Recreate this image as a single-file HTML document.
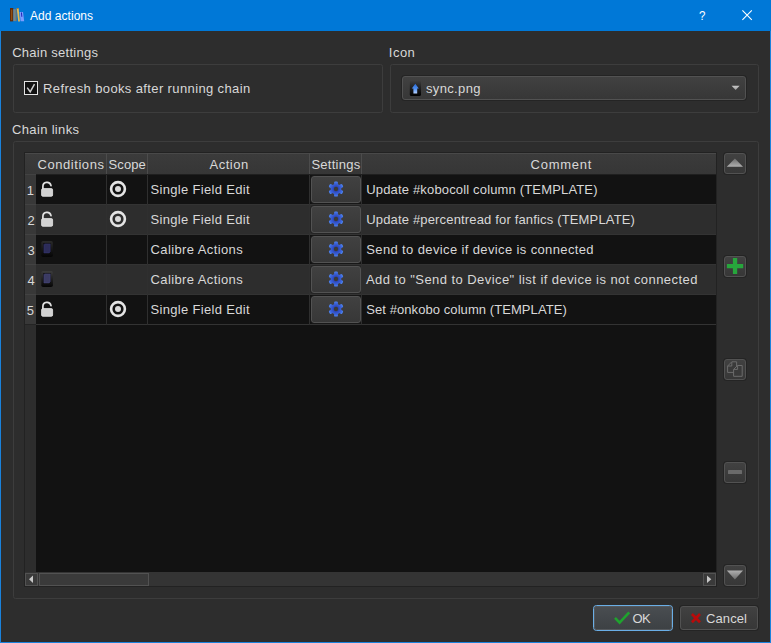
<!DOCTYPE html>
<html><head><meta charset="utf-8"><title>Add actions</title>
<style>
html,body{margin:0;padding:0;}
body{width:771px;height:643px;background:#2d2d2d;position:relative;overflow:hidden;font-family:"Liberation Sans",sans-serif;font-size:13px;color:#dddddd;}
.abs{position:absolute;}
.tx{position:absolute;white-space:nowrap;line-height:normal;}
#title{left:0;top:0;width:771px;height:31px;background:#0078d7;}
#bl{left:0;top:31px;width:1px;height:612px;background:#1a82dc;}
#br{left:770px;top:31px;width:1px;height:612px;background:#1a82dc;}
#bb{left:0;top:642px;width:771px;height:1px;background:#1a82dc;}
.gb{border:1px solid #3d3d3d;border-radius:2.5px;box-sizing:border-box;}
.btn{box-sizing:border-box;border:1px solid #525252;border-radius:3px;background:linear-gradient(#414141,#373737);box-shadow:0 0 0 1px rgba(30,30,30,0.55);}
.hd{top:153px;height:21px;background:linear-gradient(#3b3b3b,#363636);border-top:1px solid #494949;box-sizing:border-box;}
.hsep{top:153px;width:1px;height:21px;background:#4c4c4c;}
.row{left:36px;width:680px;height:29px;border-bottom:1px solid #333;}
.vh{left:25px;width:11px;height:29px;background:#383838;border-bottom:1px solid #242424;border-top:1px solid #424242;box-sizing:content-box;}
.gl{top:175px;width:1px;height:150px;background:#2f2f2f;}
.sb{box-sizing:border-box;border:1px solid #525252;background:#3a3a3a;}
</style></head><body>
<div class="abs" id="title">
<svg class="abs" style="left:9px;top:7px" width="17" height="16" viewBox="0 0 17 16"><rect x="1.0" y="1.0" width="3.3" height="13.4" fill="#5e2a0a"/><rect x="2.2" y="2.6" width="1" height="10.6" fill="#b06a18" opacity="0.75"/><rect x="4.3" y="2.2" width="3.3" height="11.9" fill="#77878b"/><rect x="6.7" y="2.2" width="0.9" height="11.9" fill="#5c6a70"/><polygon points="7.7,0.9 9.6,0.9 10.95,14.4 9.2,14.4" fill="#e9b94e"/><polygon points="7.7,0.9 9.6,0.9 9.7,1.8 7.8,1.8" fill="#9a6a2a"/><polygon points="10.6,4.9 14.0,4.9 15.2,14.3 11.6,14.3" fill="#7c9cff"/><polygon points="12.0,5.5 12.9,5.5 13.3,9.8 12.4,9.8" fill="#1818b0"/></svg>
</div>
<div class="abs" id="bl"></div><div class="abs" id="br"></div><div class="abs" id="bb"></div>
<svg class="abs" style="left:742px;top:10px" width="11" height="11" viewBox="0 0 11 11"><path d="M0.4 0.4L9.8 9.8M9.8 0.4L0.4 9.8" stroke="#fff" stroke-width="1.1" fill="none"/></svg>
<span id="t_title" class="tx" style="left:29.92px;top:9.14px;font-size:12px;color:#ffffff;letter-spacing:0.048px;">Add actions</span>
<span id="t_q" class="tx" style="left:699.1px;top:7.69px;font-size:13.6px;color:#ffffff;letter-spacing:0.000px;transform:scaleX(0.85);transform-origin:0 0;">?</span>
<span id="t_cs" class="tx" style="left:12.18px;top:45.23px;font-size:13px;color:#d8d8d8;letter-spacing:0.258px;">Chain settings</span>
<span id="t_icon" class="tx" style="left:388.84px;top:45.23px;font-size:13px;color:#d8d8d8;letter-spacing:0.480px;">Icon</span>
<span id="t_cl" class="tx" style="left:12.1px;top:122.23px;font-size:13px;color:#d8d8d8;letter-spacing:0.328px;">Chain links</span>
<div class="abs gb" style="left:13px;top:64px;width:370px;height:49px;"></div>
<div class="abs gb" style="left:390px;top:64px;width:369px;height:49px;"></div>
<div class="abs gb" style="left:13px;top:141px;width:746px;height:458px;"></div>
<div class="abs" style="left:24px;top:81px;width:14px;height:14px;box-sizing:border-box;border:1px solid #e4e4e4;background:#121212;"></div>
<svg class="abs" style="left:24px;top:81px" width="14" height="14" viewBox="0 0 14 14"><path d="M3.2 6.6L6.2 10.8L10.5 3.2" fill="none" stroke="#cfcfcf" stroke-width="1.5"/></svg>
<span id="t_refresh" class="tx" style="left:43.02px;top:81.23px;font-size:13px;color:#d8d8d8;letter-spacing:0.377px;">Refresh books after running chain</span>
<div class="abs btn" style="left:402px;top:76px;width:344px;height:24px;"></div>
<svg class="abs" style="left:409px;top:80px" width="13" height="17" viewBox="0 0 13 17"><defs><linearGradient id="sb" x1="0" y1="0" x2="0" y2="1"><stop offset="0" stop-color="#000" stop-opacity="0"/><stop offset="0.55" stop-color="#000" stop-opacity="0.55"/><stop offset="1" stop-color="#000" stop-opacity="1"/></linearGradient><linearGradient id="sa" x1="0" y1="0" x2="0" y2="1"><stop offset="0" stop-color="#2a6ad6"/><stop offset="0.5" stop-color="#4f8ff0"/><stop offset="1" stop-color="#b4d0ff"/></linearGradient></defs><rect x="0.8" y="0.5" width="11.2" height="15.6" rx="1.6" fill="url(#sb)"/><path d="M6.3 3.8L9.8 8.6H8.2V13.4H4.4V8.6H2.8Z" fill="url(#sa)"/></svg>
<span id="t_sync" class="tx" style="left:425.92px;top:81.23px;font-size:13px;color:#d8d8d8;letter-spacing:0.366px;">sync.png</span>
<svg class="abs" style="left:731px;top:85px" width="10" height="6" viewBox="0 0 10 6"><defs><linearGradient id="ca" x1="0" y1="0" x2="0" y2="1"><stop offset="0" stop-color="#c8c8c8"/><stop offset="1" stop-color="#9a9a9a"/></linearGradient></defs><polygon points="0.6,0.8 8.6,0.8 4.6,5" fill="url(#ca)"/></svg>
<div class="abs" style="left:24px;top:152px;width:693px;height:435px;background:#222;"></div>
<div class="abs" style="left:25px;top:153px;width:691px;height:433px;background:#121212;"></div>
<div class="abs" style="left:25px;top:175px;width:11px;height:397px;background:#2d2d2d;"></div>
<div class="abs hd" style="left:25px;width:691px;"></div>
<div class="abs" style="left:25px;top:174px;width:691px;height:1px;background:#1f1f1f;"></div>
<div class="abs hsep" style="left:106px;"></div>
<div class="abs hsep" style="left:147px;"></div>
<div class="abs hsep" style="left:309px;"></div>
<div class="abs hsep" style="left:361px;"></div>
<span id="h_cond" class="tx" style="left:37.56px;top:156.94px;font-size:13px;color:#d8d8d8;letter-spacing:0.551px;">Conditions</span>
<span id="h_scope" class="tx" style="left:108.56px;top:156.94px;font-size:13px;color:#d8d8d8;letter-spacing:0.080px;">Scope</span>
<span id="h_action" class="tx" style="left:209.54px;top:156.94px;font-size:13px;color:#d8d8d8;letter-spacing:0.496px;">Action</span>
<span id="h_set" class="tx" style="left:311.38px;top:156.94px;font-size:13px;color:#d8d8d8;letter-spacing:0.263px;">Settings</span>
<span id="h_com" class="tx" style="left:530.56px;top:156.94px;font-size:13px;color:#d8d8d8;letter-spacing:0.760px;">Comment</span>
<div class="abs vh" style="top:174px;"></div>
<div class="abs row" style="top:175px;background:#121212;"><svg class="abs" style="left:4px;top:5.7px" width="14" height="18" viewBox="0 0 14 18"><path d="M2.9 8.0V5.6a4.1 4.1 0 0 1 8.1-1" fill="none" stroke="#e2e2e2" stroke-width="1.7" stroke-linecap="round"/><rect x="1.6" y="7.6" width="11.0" height="7.7" rx="1.3" fill="#d2d2d2" stroke="#e6e6e6" stroke-width="0.8"/></svg><div class="abs" style="left:71px;top:0;width:22px;height:29px;"><svg class="abs" style="left:1px;top:4px" width="20" height="20" viewBox="0 0 20 20"><circle cx="10" cy="10" r="6.9" fill="none" stroke="#e4e4e4" stroke-width="2.6"/><circle cx="10" cy="10" r="3" fill="#dadada"/></svg></div><div class="abs btn" style="left:275px;top:1px;width:50px;height:27px;"><svg class="abs" style="left:16px;top:4px" width="16" height="16" viewBox="-8 -8 16 16"><defs><radialGradient id="gg" cx="0" cy="0" r="7.6" gradientUnits="userSpaceOnUse"><stop offset="0.3" stop-color="#2c45b8"/><stop offset="0.75" stop-color="#3d66dc"/><stop offset="1" stop-color="#4f86f0"/></radialGradient></defs><g fill="url(#gg)"><circle r="5.3"/><rect x="-1.9" y="-7.6" width="3.8" height="4" rx="1.2" transform="rotate(0)"/><rect x="-1.9" y="-7.6" width="3.8" height="4" rx="1.2" transform="rotate(60)"/><rect x="-1.9" y="-7.6" width="3.8" height="4" rx="1.2" transform="rotate(120)"/><rect x="-1.9" y="-7.6" width="3.8" height="4" rx="1.2" transform="rotate(180)"/><rect x="-1.9" y="-7.6" width="3.8" height="4" rx="1.2" transform="rotate(240)"/><rect x="-1.9" y="-7.6" width="3.8" height="4" rx="1.2" transform="rotate(300)"/></g><circle r="2.2" fill="#3a3a36"/></svg></div></div>
<span id="r0_n" class="tx" style="left:26.7px;top:182.63px;font-size:13px;color:#d8d8d8;letter-spacing:0.000px;">1</span>
<span id="r0_a" class="tx" style="left:150.56px;top:181.63px;font-size:13px;color:#d8d8d8;letter-spacing:0.325px;">Single Field Edit</span>
<span id="r0_c" class="tx" style="left:366.28px;top:181.63px;font-size:13px;color:#d8d8d8;letter-spacing:0.162px;">Update #kobocoll column (TEMPLATE)</span>
<div class="abs vh" style="top:204px;"></div>
<div class="abs row" style="top:205px;background:#2d2d2d;"><svg class="abs" style="left:4px;top:5.7px" width="14" height="18" viewBox="0 0 14 18"><path d="M2.9 8.0V5.6a4.1 4.1 0 0 1 8.1-1" fill="none" stroke="#e2e2e2" stroke-width="1.7" stroke-linecap="round"/><rect x="1.6" y="7.6" width="11.0" height="7.7" rx="1.3" fill="#d2d2d2" stroke="#e6e6e6" stroke-width="0.8"/></svg><div class="abs" style="left:71px;top:0;width:22px;height:29px;"><svg class="abs" style="left:1px;top:4px" width="20" height="20" viewBox="0 0 20 20"><circle cx="10" cy="10" r="6.9" fill="none" stroke="#e4e4e4" stroke-width="2.6"/><circle cx="10" cy="10" r="3" fill="#dadada"/></svg></div><div class="abs btn" style="left:275px;top:1px;width:50px;height:27px;"><svg class="abs" style="left:16px;top:4px" width="16" height="16" viewBox="-8 -8 16 16"><defs><radialGradient id="gg1" cx="0" cy="0" r="7.6" gradientUnits="userSpaceOnUse"><stop offset="0.3" stop-color="#2c45b8"/><stop offset="0.75" stop-color="#3d66dc"/><stop offset="1" stop-color="#4f86f0"/></radialGradient></defs><g fill="url(#gg1)"><circle r="5.3"/><rect x="-1.9" y="-7.6" width="3.8" height="4" rx="1.2" transform="rotate(0)"/><rect x="-1.9" y="-7.6" width="3.8" height="4" rx="1.2" transform="rotate(60)"/><rect x="-1.9" y="-7.6" width="3.8" height="4" rx="1.2" transform="rotate(120)"/><rect x="-1.9" y="-7.6" width="3.8" height="4" rx="1.2" transform="rotate(180)"/><rect x="-1.9" y="-7.6" width="3.8" height="4" rx="1.2" transform="rotate(240)"/><rect x="-1.9" y="-7.6" width="3.8" height="4" rx="1.2" transform="rotate(300)"/></g><circle r="2.2" fill="#3a3a36"/></svg></div></div>
<span id="r1_n" class="tx" style="left:27.5px;top:212.63px;font-size:13px;color:#d8d8d8;letter-spacing:0.000px;">2</span>
<span id="r1_a" class="tx" style="left:150.56px;top:211.63px;font-size:13px;color:#d8d8d8;letter-spacing:0.325px;">Single Field Edit</span>
<span id="r1_c" class="tx" style="left:366.28px;top:211.63px;font-size:13px;color:#d8d8d8;letter-spacing:0.162px;">Update #percentread for fanfics (TEMPLATE)</span>
<div class="abs vh" style="top:234px;"></div>
<div class="abs row" style="top:235px;background:#121212;"><svg class="abs" style="left:4px;top:5px" width="14" height="18" viewBox="0 0 14 18"><defs><linearGradient id="dg0" x1="0" y1="0" x2="0" y2="1"><stop offset="0" stop-color="#2a2a2a"/><stop offset="1" stop-color="#050505"/></linearGradient></defs><rect x="1.3" y="1" width="11.6" height="16" rx="1.8" fill="url(#dg0)"/><rect x="3.2" y="3.2" width="7.4" height="10" fill="#0c0c0c"/><path d="M4.6 3.9H10.2V11.9L9.2 12.9H3.9V4.6Z" fill="#2c2c58" stroke="#38387a" stroke-width="0.5"/></svg><div class="abs btn" style="left:275px;top:1px;width:50px;height:27px;"><svg class="abs" style="left:16px;top:4px" width="16" height="16" viewBox="-8 -8 16 16"><defs><radialGradient id="gg2" cx="0" cy="0" r="7.6" gradientUnits="userSpaceOnUse"><stop offset="0.3" stop-color="#2c45b8"/><stop offset="0.75" stop-color="#3d66dc"/><stop offset="1" stop-color="#4f86f0"/></radialGradient></defs><g fill="url(#gg2)"><circle r="5.3"/><rect x="-1.9" y="-7.6" width="3.8" height="4" rx="1.2" transform="rotate(0)"/><rect x="-1.9" y="-7.6" width="3.8" height="4" rx="1.2" transform="rotate(60)"/><rect x="-1.9" y="-7.6" width="3.8" height="4" rx="1.2" transform="rotate(120)"/><rect x="-1.9" y="-7.6" width="3.8" height="4" rx="1.2" transform="rotate(180)"/><rect x="-1.9" y="-7.6" width="3.8" height="4" rx="1.2" transform="rotate(240)"/><rect x="-1.9" y="-7.6" width="3.8" height="4" rx="1.2" transform="rotate(300)"/></g><circle r="2.2" fill="#3a3a36"/></svg></div></div>
<span id="r2_n" class="tx" style="left:27.5px;top:242.63px;font-size:13px;color:#d8d8d8;letter-spacing:0.000px;">3</span>
<span id="r2_a" class="tx" style="left:150.56px;top:241.63px;font-size:13px;color:#d8d8d8;letter-spacing:0.389px;">Calibre Actions</span>
<span id="r2_c" class="tx" style="left:366.28px;top:241.63px;font-size:13px;color:#d8d8d8;letter-spacing:0.373px;">Send to device if device is connected</span>
<div class="abs vh" style="top:264px;"></div>
<div class="abs row" style="top:265px;background:#2d2d2d;"><svg class="abs" style="left:4px;top:5px" width="14" height="18" viewBox="0 0 14 18"><defs><linearGradient id="dg1" x1="0" y1="0" x2="0" y2="1"><stop offset="0" stop-color="#3c3c3c"/><stop offset="1" stop-color="#050505"/></linearGradient></defs><rect x="1.3" y="1" width="11.6" height="16" rx="1.8" fill="url(#dg1)"/><rect x="3.2" y="3.2" width="7.4" height="10" fill="#0c0c0c"/><path d="M4.6 3.9H10.2V11.9L9.2 12.9H3.9V4.6Z" fill="#3b3b62" stroke="#4a4a88" stroke-width="0.5"/></svg><div class="abs btn" style="left:275px;top:1px;width:50px;height:27px;"><svg class="abs" style="left:16px;top:4px" width="16" height="16" viewBox="-8 -8 16 16"><defs><radialGradient id="gg3" cx="0" cy="0" r="7.6" gradientUnits="userSpaceOnUse"><stop offset="0.3" stop-color="#2c45b8"/><stop offset="0.75" stop-color="#3d66dc"/><stop offset="1" stop-color="#4f86f0"/></radialGradient></defs><g fill="url(#gg3)"><circle r="5.3"/><rect x="-1.9" y="-7.6" width="3.8" height="4" rx="1.2" transform="rotate(0)"/><rect x="-1.9" y="-7.6" width="3.8" height="4" rx="1.2" transform="rotate(60)"/><rect x="-1.9" y="-7.6" width="3.8" height="4" rx="1.2" transform="rotate(120)"/><rect x="-1.9" y="-7.6" width="3.8" height="4" rx="1.2" transform="rotate(180)"/><rect x="-1.9" y="-7.6" width="3.8" height="4" rx="1.2" transform="rotate(240)"/><rect x="-1.9" y="-7.6" width="3.8" height="4" rx="1.2" transform="rotate(300)"/></g><circle r="2.2" fill="#3a3a36"/></svg></div></div>
<span id="r3_n" class="tx" style="left:27.5px;top:272.63px;font-size:13px;color:#d8d8d8;letter-spacing:0.000px;">4</span>
<span id="r3_a" class="tx" style="left:150.56px;top:271.63px;font-size:13px;color:#d8d8d8;letter-spacing:0.389px;">Calibre Actions</span>
<span id="r3_c" class="tx" style="left:365.96px;top:271.63px;font-size:13px;color:#d8d8d8;letter-spacing:0.440px;">Add to &quot;Send to Device&quot; list if device is not connected</span>
<div class="abs vh" style="top:294px;"></div>
<div class="abs row" style="top:295px;background:#121212;"><svg class="abs" style="left:4px;top:5.7px" width="14" height="18" viewBox="0 0 14 18"><path d="M2.9 8.0V5.6a4.1 4.1 0 0 1 8.1-1" fill="none" stroke="#e2e2e2" stroke-width="1.7" stroke-linecap="round"/><rect x="1.6" y="7.6" width="11.0" height="7.7" rx="1.3" fill="#d2d2d2" stroke="#e6e6e6" stroke-width="0.8"/></svg><div class="abs" style="left:71px;top:0;width:22px;height:29px;"><svg class="abs" style="left:1px;top:4px" width="20" height="20" viewBox="0 0 20 20"><circle cx="10" cy="10" r="6.9" fill="none" stroke="#e4e4e4" stroke-width="2.6"/><circle cx="10" cy="10" r="3" fill="#dadada"/></svg></div><div class="abs btn" style="left:275px;top:1px;width:50px;height:27px;"><svg class="abs" style="left:16px;top:4px" width="16" height="16" viewBox="-8 -8 16 16"><defs><radialGradient id="gg4" cx="0" cy="0" r="7.6" gradientUnits="userSpaceOnUse"><stop offset="0.3" stop-color="#2c45b8"/><stop offset="0.75" stop-color="#3d66dc"/><stop offset="1" stop-color="#4f86f0"/></radialGradient></defs><g fill="url(#gg4)"><circle r="5.3"/><rect x="-1.9" y="-7.6" width="3.8" height="4" rx="1.2" transform="rotate(0)"/><rect x="-1.9" y="-7.6" width="3.8" height="4" rx="1.2" transform="rotate(60)"/><rect x="-1.9" y="-7.6" width="3.8" height="4" rx="1.2" transform="rotate(120)"/><rect x="-1.9" y="-7.6" width="3.8" height="4" rx="1.2" transform="rotate(180)"/><rect x="-1.9" y="-7.6" width="3.8" height="4" rx="1.2" transform="rotate(240)"/><rect x="-1.9" y="-7.6" width="3.8" height="4" rx="1.2" transform="rotate(300)"/></g><circle r="2.2" fill="#3a3a36"/></svg></div></div>
<span id="r4_n" class="tx" style="left:26.7px;top:302.63px;font-size:13px;color:#d8d8d8;letter-spacing:0.000px;">5</span>
<span id="r4_a" class="tx" style="left:150.56px;top:301.63px;font-size:13px;color:#d8d8d8;letter-spacing:0.325px;">Single Field Edit</span>
<span id="r4_c" class="tx" style="left:366.28px;top:301.63px;font-size:13px;color:#d8d8d8;letter-spacing:0.074px;">Set #onkobo column (TEMPLATE)</span>
<div class="abs gl" style="left:106px;"></div>
<div class="abs gl" style="left:147px;"></div>
<div class="abs gl" style="left:309px;"></div>
<div class="abs gl" style="left:361px;"></div>
<div class="abs" style="left:25px;top:572px;width:691px;height:14px;background:#343434;"></div>
<div class="abs sb" style="left:25px;top:573px;width:13px;height:13px;"></div>
<div class="abs sb" style="left:703px;top:573px;width:13px;height:13px;"></div>
<div class="abs sb" style="left:39px;top:573px;width:110px;height:13px;"></div>
<svg class="abs" style="left:25px;top:573px" width="13" height="13" viewBox="0 0 13 13"><polygon points="4.0,6.2 8.0,2.5 8.0,9.9" fill="#c8c8c8"/></svg>
<svg class="abs" style="left:703px;top:573px" width="13" height="13" viewBox="0 0 13 13"><polygon points="8.3,6.2 4.0,2.5 4.0,9.9" fill="#c8c8c8"/></svg>
<div class="abs btn" style="left:724px;top:153px;width:22px;height:21px;"></div>
<div class="abs btn" style="left:724px;top:256px;width:22px;height:21px;"></div>
<div class="abs btn" style="left:724px;top:359px;width:22px;height:21px;"></div>
<div class="abs btn" style="left:724px;top:462px;width:22px;height:21px;"></div>
<div class="abs btn" style="left:724px;top:565px;width:22px;height:21px;"></div>
<svg class="abs" style="left:724px;top:153px" width="22" height="21" viewBox="0 0 22 21"><defs><linearGradient id="ua" x1="0" y1="0" x2="0" y2="1"><stop offset="0" stop-color="#6c6c6c"/><stop offset="1" stop-color="#b0b0b0"/></linearGradient></defs><polygon points="10.9,5.6 19,13.8 2.8,13.8" fill="url(#ua)"/></svg>
<svg class="abs" style="left:724px;top:256px" width="22" height="21" viewBox="0 0 22 21"><path d="M8.9 2.1h4.3v6.0h6.0v4.2h-6.0v5.8h-4.3v-5.8h-6.0v-4.2h6.0z" fill="#27a63c"/></svg>
<svg class="abs" style="left:724px;top:359px" width="22" height="21" viewBox="0 0 22 21"><g fill="#3a3a3a" stroke="#6c6c6c" stroke-width="1"><path d="M3.6 7.0L7.8 2.8H12.6V13.4H3.6Z"/><path d="M3.7 7.0H7.8V2.9" fill="none"/><path d="M9.6 10.4L13.6 6.5H18.2V17.3H9.6Z"/><path d="M9.7 10.4H13.6V6.6" fill="none"/></g></svg>
<div class="abs" style="left:728px;top:470px;width:14px;height:4px;background:#6a6a6a;border-radius:0.5px;"></div>
<svg class="abs" style="left:724px;top:565px" width="22" height="21" viewBox="0 0 22 21"><defs><linearGradient id="da" x1="0" y1="0" x2="0" y2="1"><stop offset="0" stop-color="#b0b0b0"/><stop offset="1" stop-color="#6c6c6c"/></linearGradient></defs><polygon points="2.8,5.4 19,5.4 10.9,14.4" fill="url(#da)"/></svg>
<div class="abs" style="left:593px;top:605px;width:80px;height:26px;box-sizing:border-box;border:1px solid #6aaee6;border-radius:3.5px;background:#4a4e52;"></div>
<div class="abs" style="left:594px;top:606px;width:78px;height:24px;box-sizing:border-box;border:1px solid #54585c;border-radius:2.5px;background:linear-gradient(#494d51,#3d4144);"></div>
<svg class="abs" style="left:612px;top:609px" width="22" height="18" viewBox="0 0 22 18"><path d="M3 8.8L7.6 13.6L17.2 3.4" fill="none" stroke="#1fa32e" stroke-width="2.6"/></svg>
<span id="t_ok" class="tx" style="left:632.56px;top:611.24px;font-size:13px;color:#d8d8d8;letter-spacing:-0.600px;">OK</span>
<div class="abs btn" style="left:680px;top:606px;width:78px;height:24px;"></div>
<svg class="abs" style="left:689px;top:611px" width="14" height="14" viewBox="0 0 14 14"><path d="M2.9 3L11 11.2M11 3L2.9 11.2" fill="none" stroke="#b80b0b" stroke-width="2.7"/></svg>
<span id="t_cancel" class="tx" style="left:705.92px;top:611.24px;font-size:13px;color:#d8d8d8;letter-spacing:0.128px;">Cancel</span>
</body></html>
